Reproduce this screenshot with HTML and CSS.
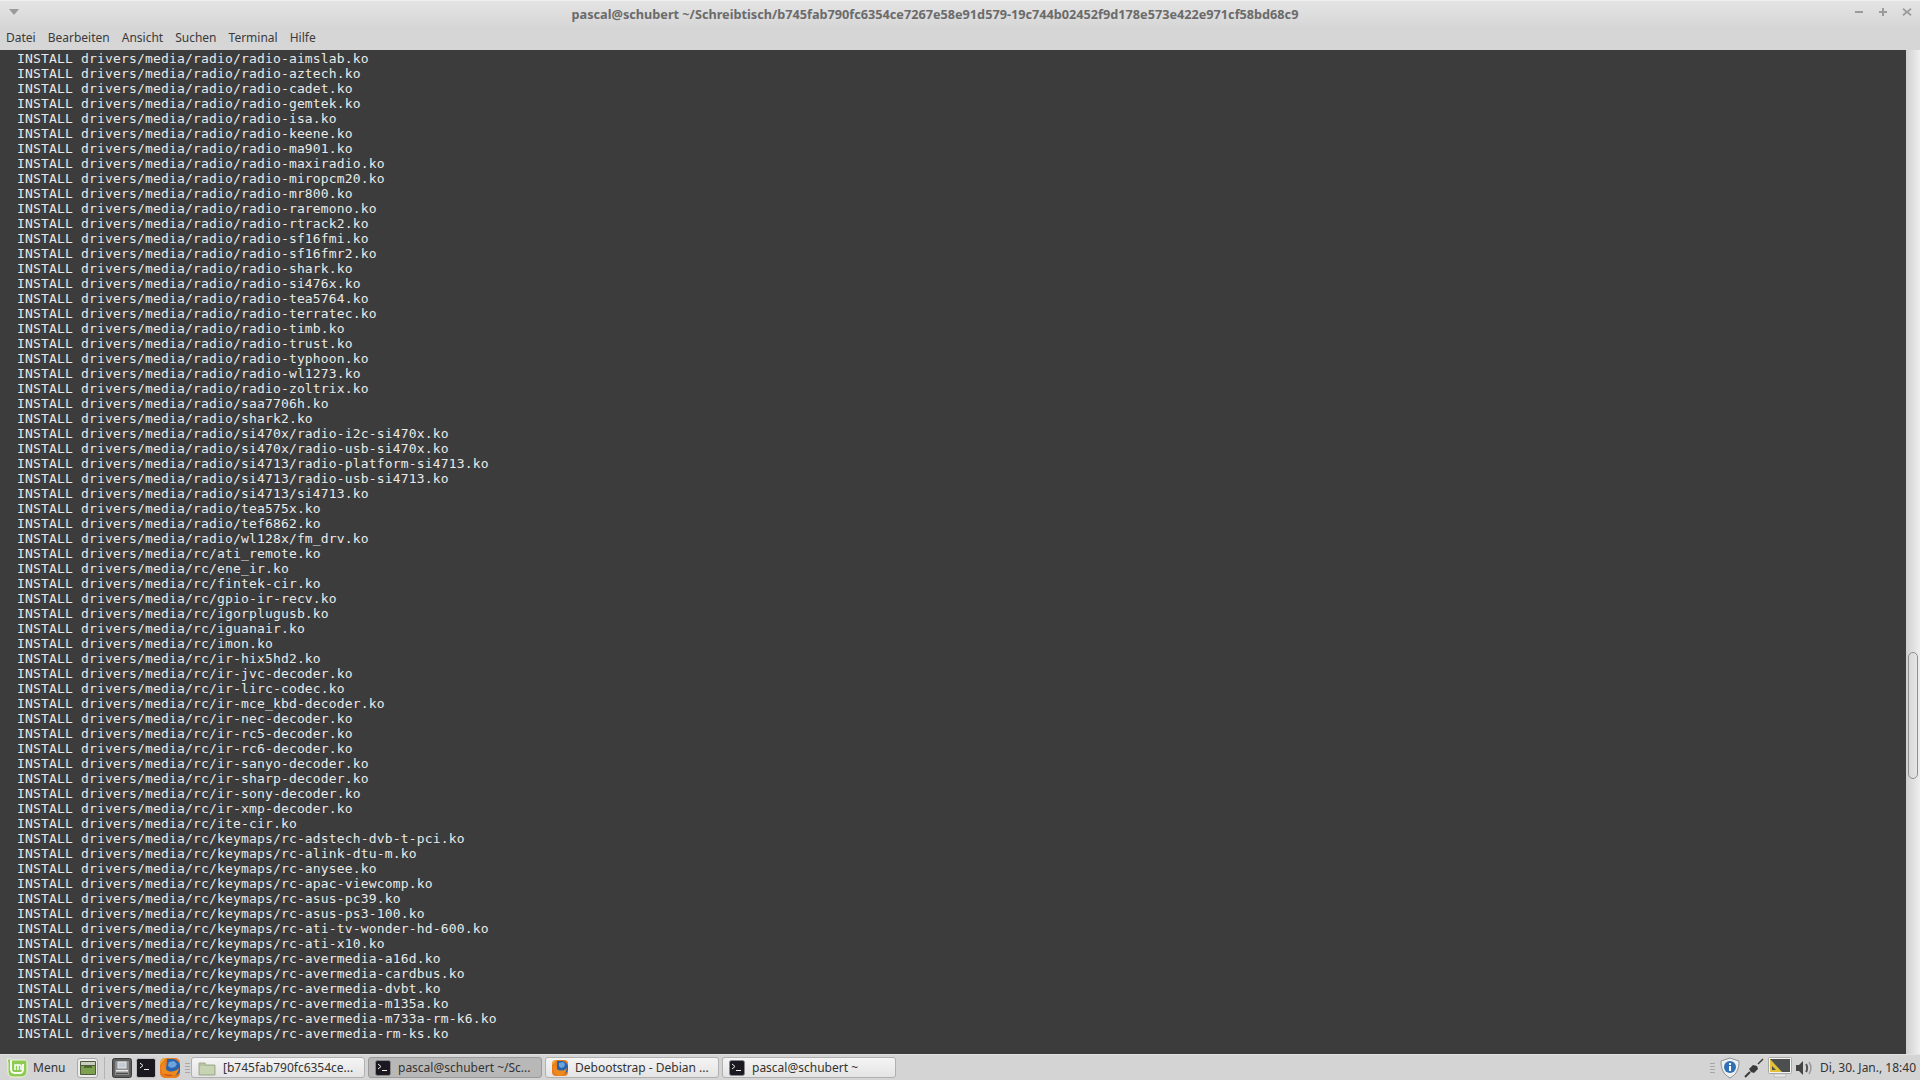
FILE: index.html
```html
<!DOCTYPE html>
<html lang="de">
<head>
<meta charset="utf-8">
<title>pascal@schubert</title>
<link rel="stylesheet" href="styles.css">
</head>
<body>
<div class="window">
  <header class="titlebar">
    <svg class="win-menu" width="12" height="7" viewBox="0 0 12 7"><path d="M1 0h10L6 6z" fill="#9a9a9a"/></svg>
    <div class="title">pascal@schubert ~/Schreibtisch/b745fab790fc6354ce7267e58e91d579-19c744b02452f9d178e573e422e971cf58bd68c9</div>
    <div class="win-controls">
      <svg width="10" height="10" viewBox="0 0 10 10"><rect x="1" y="4" width="8" height="2" fill="#9a9a9a"/></svg>
      <svg width="10" height="10" viewBox="0 0 10 10"><path d="M4 1h2v3h3v2H6v3H4V6H1V4h3z" fill="#9a9a9a"/></svg>
      <svg width="10" height="10" viewBox="0 0 10 10"><path d="M1.500 1 5 4l3.500-3L9.500 2.500 6.500 5l3 2.500L8.500 9 5 6 1.500 9 .5 7.500l3-2.500-3-2.500z" fill="#9a9a9a"/></svg>
    </div>
  </header>
  <nav class="menubar">
    <span>Datei</span><span>Bearbeiten</span><span>Ansicht</span><span>Suchen</span><span>Terminal</span><span>Hilfe</span>
  </nav>
  <main class="terminal-wrap">
<pre class="terminal">  INSTALL drivers/media/radio/radio-aimslab.ko
  INSTALL drivers/media/radio/radio-aztech.ko
  INSTALL drivers/media/radio/radio-cadet.ko
  INSTALL drivers/media/radio/radio-gemtek.ko
  INSTALL drivers/media/radio/radio-isa.ko
  INSTALL drivers/media/radio/radio-keene.ko
  INSTALL drivers/media/radio/radio-ma901.ko
  INSTALL drivers/media/radio/radio-maxiradio.ko
  INSTALL drivers/media/radio/radio-miropcm20.ko
  INSTALL drivers/media/radio/radio-mr800.ko
  INSTALL drivers/media/radio/radio-raremono.ko
  INSTALL drivers/media/radio/radio-rtrack2.ko
  INSTALL drivers/media/radio/radio-sf16fmi.ko
  INSTALL drivers/media/radio/radio-sf16fmr2.ko
  INSTALL drivers/media/radio/radio-shark.ko
  INSTALL drivers/media/radio/radio-si476x.ko
  INSTALL drivers/media/radio/radio-tea5764.ko
  INSTALL drivers/media/radio/radio-terratec.ko
  INSTALL drivers/media/radio/radio-timb.ko
  INSTALL drivers/media/radio/radio-trust.ko
  INSTALL drivers/media/radio/radio-typhoon.ko
  INSTALL drivers/media/radio/radio-wl1273.ko
  INSTALL drivers/media/radio/radio-zoltrix.ko
  INSTALL drivers/media/radio/saa7706h.ko
  INSTALL drivers/media/radio/shark2.ko
  INSTALL drivers/media/radio/si470x/radio-i2c-si470x.ko
  INSTALL drivers/media/radio/si470x/radio-usb-si470x.ko
  INSTALL drivers/media/radio/si4713/radio-platform-si4713.ko
  INSTALL drivers/media/radio/si4713/radio-usb-si4713.ko
  INSTALL drivers/media/radio/si4713/si4713.ko
  INSTALL drivers/media/radio/tea575x.ko
  INSTALL drivers/media/radio/tef6862.ko
  INSTALL drivers/media/radio/wl128x/fm_drv.ko
  INSTALL drivers/media/rc/ati_remote.ko
  INSTALL drivers/media/rc/ene_ir.ko
  INSTALL drivers/media/rc/fintek-cir.ko
  INSTALL drivers/media/rc/gpio-ir-recv.ko
  INSTALL drivers/media/rc/igorplugusb.ko
  INSTALL drivers/media/rc/iguanair.ko
  INSTALL drivers/media/rc/imon.ko
  INSTALL drivers/media/rc/ir-hix5hd2.ko
  INSTALL drivers/media/rc/ir-jvc-decoder.ko
  INSTALL drivers/media/rc/ir-lirc-codec.ko
  INSTALL drivers/media/rc/ir-mce_kbd-decoder.ko
  INSTALL drivers/media/rc/ir-nec-decoder.ko
  INSTALL drivers/media/rc/ir-rc5-decoder.ko
  INSTALL drivers/media/rc/ir-rc6-decoder.ko
  INSTALL drivers/media/rc/ir-sanyo-decoder.ko
  INSTALL drivers/media/rc/ir-sharp-decoder.ko
  INSTALL drivers/media/rc/ir-sony-decoder.ko
  INSTALL drivers/media/rc/ir-xmp-decoder.ko
  INSTALL drivers/media/rc/ite-cir.ko
  INSTALL drivers/media/rc/keymaps/rc-adstech-dvb-t-pci.ko
  INSTALL drivers/media/rc/keymaps/rc-alink-dtu-m.ko
  INSTALL drivers/media/rc/keymaps/rc-anysee.ko
  INSTALL drivers/media/rc/keymaps/rc-apac-viewcomp.ko
  INSTALL drivers/media/rc/keymaps/rc-asus-pc39.ko
  INSTALL drivers/media/rc/keymaps/rc-asus-ps3-100.ko
  INSTALL drivers/media/rc/keymaps/rc-ati-tv-wonder-hd-600.ko
  INSTALL drivers/media/rc/keymaps/rc-ati-x10.ko
  INSTALL drivers/media/rc/keymaps/rc-avermedia-a16d.ko
  INSTALL drivers/media/rc/keymaps/rc-avermedia-cardbus.ko
  INSTALL drivers/media/rc/keymaps/rc-avermedia-dvbt.ko
  INSTALL drivers/media/rc/keymaps/rc-avermedia-m135a.ko
  INSTALL drivers/media/rc/keymaps/rc-avermedia-m733a-rm-k6.ko
  INSTALL drivers/media/rc/keymaps/rc-avermedia-rm-ks.ko</pre>
    <div class="scrollbar"><div class="thumb"></div></div>
  </main>
</div>
<footer class="panel">
  <div class="menu-btn">
    <svg width="22" height="21" viewBox="0 0 22 21"><path d="M1 2h4c1 0 1 0 1 1h12c2 0 3 1 3 3v8c0 4-3 6-6 6H7c-3 0-5-2-5-5V6z" fill="#8fcb52" stroke="#eef6e0" stroke-width="1"/><path d="M5 3v9c0 3 2 4 4 4h5c2 0 3-1 3-4V7" fill="none" stroke="#fff" stroke-width="1.800"/><path d="M9 13V8h5c1 0 1 1 1 1v4M12 8v5" fill="none" stroke="#fff" stroke-width="1.500"/></svg>
    <span>Menu</span>
  </div>
  <div class="launcher boxed">
    <svg width="18" height="18" viewBox="0 0 18 18"><rect x="1" y="2" width="16" height="14" rx="1" fill="#4f5a3e"/><rect x="2" y="3" width="14" height="3" fill="#c9cdbf"/><rect x="2" y="7" width="14" height="8" fill="#7da24f"/><rect x="5" y="7" width="8" height="2" fill="#4e6b2f"/></svg>
  </div>
  <div class="sep"></div>
  <div class="launcher">
    <svg width="20" height="20" viewBox="0 0 20 20"><rect x=".5" y=".5" width="19" height="19" rx="2" fill="#5d5d5d" stroke="#3d3d3d"/><rect x="3" y="3" width="14" height="14" fill="#8b8b8b"/><rect x="6" y="4" width="8" height="6" fill="#c3ccd6" stroke="#e6e6e6"/><rect x="4" y="12" width="12" height="1.500" fill="#e8e8e8"/><rect x="4" y="15" width="12" height="1" fill="#4a4a4a"/></svg>
  </div>
  <div class="launcher">
    <svg width="20" height="20" viewBox="0 0 20 20"><rect x=".5" y=".5" width="19" height="19" rx="2" fill="#1b1820" stroke="#bdbdbd"/><path d="M4 5l3 2.500L4 10" fill="none" stroke="#eee" stroke-width="1"/><rect x="8" y="11" width="5" height="1" fill="#eee"/></svg>
  </div>
  <div class="launcher">
    <svg width="20" height="20" viewBox="0 0 20 20"><rect width="20" height="20" rx="5" fill="#e87a1d"/><path d="M0 5c1-3 3-5 6-5L3 3 0 7z" fill="#f2b43a"/><path d="M7 1h7c3 1 5 3 6 6v6c-1 4-5 5-9 5-3 0-5-2-5-6 0-3 1-5 1-11z" fill="#2a64ad"/><path d="M9 4l5-1 3 3-2 3-4 1-3-2z" fill="#6ea4dc"/><path d="M1 9c1-3 3-5 4-5-1 3 0 7 3 9 3 1 7 1 11-3-1 6-5 10-9 10-5 0-9-5-9-11z" fill="#ee8a1d"/><path d="M3 16c3 3 8 3 11 1-4 0-8-1-11-1z" fill="#d3561a"/></svg>
  </div>
  <div class="handle"></div>
  <div class="tasks">
    <div class="task">
      <svg width="18" height="16" viewBox="0 0 18 16"><path d="M1 3h6l1 2h9v10H1z" fill="#b6c4a0" stroke="#a2ae90"/><rect x="2" y="6" width="14" height="8" fill="#c7d3b2"/></svg>
      <span>[b745fab790fc6354ce...</span>
    </div>
    <div class="task active">
      <svg width="16" height="16" viewBox="0 0 16 16"><rect x=".5" y=".5" width="15" height="15" rx="2" fill="#1b1820" stroke="#888"/><path d="M3 4l3 2.500L3 9" fill="none" stroke="#eee"/><rect x="7" y="10" width="5" height="1" fill="#eee"/></svg>
      <span>pascal@schubert ~/Sc...</span>
    </div>
    <div class="task">
      <svg width="16" height="16" viewBox="0 0 16 16"><rect width="16" height="16" rx="4" fill="#e87a1d"/><path d="M0 4c1-2 2-4 5-4L2 3 0 5z" fill="#f2b43a"/><path d="M5 1h6c2 1 4 2 5 5v4c-1 3-4 4-7 4-2 0-4-2-4-5 0-2 0-6 0-8z" fill="#2a64ad"/><path d="M7 3l4-1 2 2-1 3-3 1-2-2z" fill="#6ea4dc"/><path d="M1 7c1-2 2-4 3-4-1 2 0 6 2 7 3 1 6 1 9-2-1 5-4 8-7 8-4 0-7-4-7-9z" fill="#ee8a1d"/></svg>
      <span>Debootstrap - Debian ...</span>
    </div>
    <div class="task">
      <svg width="16" height="16" viewBox="0 0 16 16"><rect x=".5" y=".5" width="15" height="15" rx="2" fill="#1b1820" stroke="#888"/><path d="M3 4l3 2.500L3 9" fill="none" stroke="#eee"/><rect x="7" y="10" width="5" height="1" fill="#eee"/></svg>
      <span>pascal@schubert ~</span>
    </div>
  </div>
  <div class="tray">
    <div class="handle"></div>
    <svg class="tray-shield" width="20" height="22" viewBox="0 0 20 22"><path d="M10 1l9 3c0 8-2 13-9 17C3 17 1 12 1 4z" fill="#eceef0" stroke="#8e9398"/><circle cx="10" cy="10" r="6" fill="#2f6fb5"/><rect x="9" y="9" width="2" height="5" fill="#fff"/><rect x="9" y="6" width="2" height="2" fill="#fff"/></svg>
    <svg class="tray-plug" width="20" height="20" viewBox="0 0 20 20"><path d="M1 19l5-5" stroke="#3a3a3a" stroke-width="2"/><path d="M14 6l5-5" stroke="#3a3a3a" stroke-width="1.500"/><path d="M5 11l4-4 4 1 1 3-4 4-3-1z" fill="#3a3a3a"/></svg>
    <svg class="tray-screen" width="24" height="22" viewBox="0 0 24 22"><rect x=".5" y=".5" width="23" height="16" rx="1" fill="#f3f3f0" stroke="#a8a8a8"/><rect x="2" y="2" width="20" height="13" fill="#4b4f4f"/><path d="M2 2l12 13H2z" fill="#e3bf3a"/><path d="M4 9l4 4H4z" fill="#4b4f4f"/><rect x="6" y="17" width="12" height="3" fill="#e8e8e8" stroke="#a8a8a8" stroke-width=".6"/></svg>
    <svg class="tray-sound" width="18" height="18" viewBox="0 0 18 18"><path d="M1 6h3l4-4v14l-4-4H1z" fill="#444"/><path d="M11 5c1.500 2 1.500 6 0 8" fill="none" stroke="#555" stroke-width="2"/><path d="M14 3c2.500 3.500 2.500 8.500 0 12" fill="none" stroke="#999" stroke-width="1.500"/></svg>
    <span class="clock">Di, 30. Jan., 18:40</span>
  </div>
</footer>
</body>
</html>
```
FILE: styles.css
```css
* { box-sizing: border-box; }
html, body { margin: 0; padding: 0; }
body {
  width: 1920px;
  height: 1080px;
  overflow: hidden;
  display: flex;
  flex-direction: column;
  font-family: "Noto Sans", sans-serif;
  font-size: 12px;
  background: #d6d6d6;
}
.window { flex: 1; display: flex; flex-direction: column; min-height: 0; }
.titlebar {
  height: 28px;
  display: flex;
  align-items: center;
  padding: 0 6px 2px 8px;
  background: linear-gradient(#e4e4e4, #d6d6d6);
  border-top: 1px solid #efefef;
}
.win-menu { flex: none; margin-top: -3px; }
.title {
  flex: 1;
  text-align: center;
  font-size: 12.7px;
  font-weight: 700;
  color: #6b6b6b;
  padding-right: 4px;
  white-space: nowrap;
}
.win-controls { display: flex; gap: 14px; flex: none; padding-right: 2px; margin-top: -3px; }
.menubar {
  height: 22px;
  display: flex;
  align-items: center;
  gap: 12px;
  padding: 0 6px 4px;
  background: #d6d6d6;
  color: #3a3a3a;
}
.terminal-wrap { flex: 1; display: flex; min-height: 0; }
.terminal {
  flex: 1;
  margin: 0;
  padding: 1px;
  background: #3c3c3c;
  color: #eaeaea;
  font-family: "DejaVu Sans Mono", monospace;
  font-size: 13px;
  line-height: 15px;
  letter-spacing: 0.17px;
  overflow: hidden;
}
.scrollbar {
  width: 14px;
  flex: none;
  padding: 602px 2px 0;
  background: linear-gradient(90deg, #d0d0d0, #efefef);
}
.thumb {
  height: 127px;
  border: 1px solid #8f8f8f;
  border-radius: 5px;
  background: linear-gradient(90deg, #d8d8d8, #e6e6e6);
}
.panel {
  height: 26px;
  flex: none;
  display: flex;
  align-items: center;
  padding: 0 4px 0 6px;
  background: #d4d4d4;
  border-top: 1px solid #e2e2e2;
  color: #333;
}
.menu-btn { display: flex; align-items: center; gap: 5px; width: 71px; flex: none; font-size: 12px; }
.launcher { width: 20px; height: 20px; display: flex; align-items: center; justify-content: center; flex: none; margin-right: 4px; }
.boxed { width: 21px; border: 1px solid #a8a8a8; border-radius: 3px; background: #ececec; }
.sep { width: 1px; height: 22px; background: #b4b4b4; margin: 0 7px 0 2px; flex: none; }
.handle {
  width: 5px;
  height: 10px;
  flex: none;
  margin: 0 1px;
  background: repeating-linear-gradient(#a8a8a8 0 1px, transparent 1px 3px);
}
.tasks { display: flex; gap: 3px; flex: none; }
.task {
  width: 174px;
  height: 21px;
  display: flex;
  align-items: center;
  gap: 7px;
  padding: 0 6px;
  border: 1px solid #b0b0b0;
  border-radius: 3px;
  background: linear-gradient(#f4f4f4, #e4e4e4);
  color: #333;
  white-space: nowrap;
  overflow: hidden;
}
.task svg { flex: none; }
.task.active { background: #b8b8b8; border-color: #9a9a9a; }
.tray { margin-left: auto; display: flex; align-items: center; }
.tray-shield { margin: 0 4px; }
.tray-plug { margin-right: 4px; }
.tray-screen { margin-right: 3px; }
.tray-sound { margin-right: 7px; }
.clock { color: #333; white-space: nowrap; }
```
